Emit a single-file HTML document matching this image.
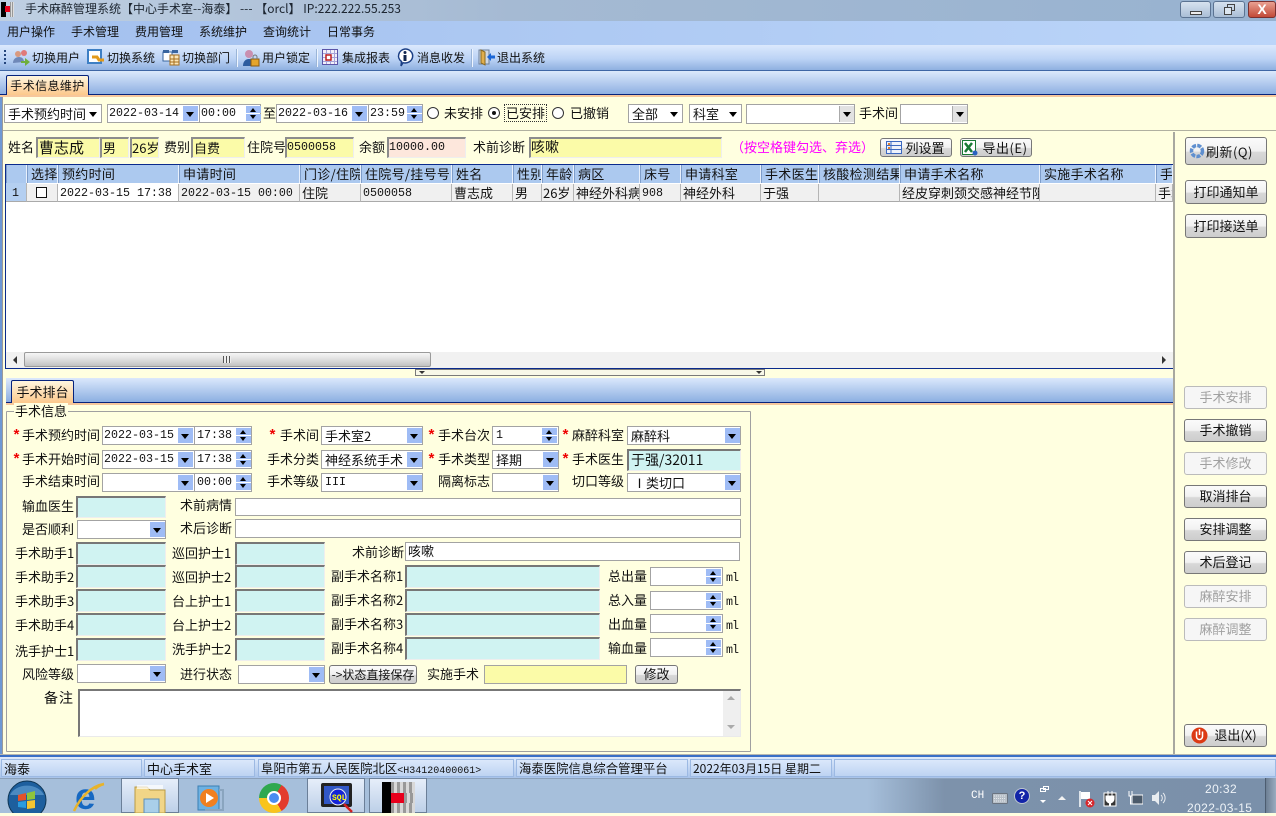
<!DOCTYPE html>
<html lang="zh"><head><meta charset="utf-8"><title>手术麻醉管理系统</title>
<style>
html,body{margin:0;padding:0}
body{width:1276px;height:813px;overflow:hidden;position:relative;background:#ffffe0;font:13px/16px "WenQuanYi Zen Hei","Noto Sans CJK SC",sans-serif;color:#111}
div,svg,span.a{position:absolute;box-sizing:border-box}
.t{white-space:nowrap;height:16px}
.m{font-family:"Liberation Mono","WenQuanYi Zen Hei",monospace;font-size:11.67px}
.s{color:#e00;font:bold 15px/16px "Liberation Mono",monospace}
.c{background:#fff;border:1px solid #a3a3a3;white-space:nowrap;padding:0 0 0 3px;line-height:17px}
.d{top:1px;bottom:1px;width:15px;background:#9fbcf5}
.d:after{content:"";position:absolute;left:3px;top:50%;margin-top:-2px;border:4px solid transparent;border-top:5px solid #000;border-bottom:0}
.w{top:1px;bottom:1px;width:15px}
.w i{position:absolute;left:0;width:15px;height:47%;background:#9fbcf5}
.w i:first-child{top:0}.w i:last-child{bottom:0}
.w i:after{content:"";position:absolute;left:4px;top:50%;margin-top:-2px;border:3.5px solid transparent}
.w i:first-child:after{border-bottom:4px solid #000;border-top:0}
.w i:last-child:after{border-top:4px solid #000;border-bottom:0}
.y{background:#fbfba8;border:1px solid #eee;border-top:2px solid #8c8c8c;border-left:2px solid #8c8c8c;padding-left:0;white-space:nowrap;line-height:17px}
.u{background:#d0f3f2;border:1px solid #eee;border-top:2px solid #777;border-left:2px solid #777}
.i{background:#fff;border:1px solid #a3a3a3;padding-left:2px;line-height:17px}
.b{border:1px solid #777;border-radius:3px;background:linear-gradient(#fbfbfb,#f1f1f1 50%,#d8d8d8 55%,#cdcdcd);text-align:center;white-space:nowrap;line-height:20px}
.x{border-color:#bbb;background:#f6f6f6;color:#a0a0a0}
.tab{background:linear-gradient(#fff6df,#fcc88c);border:1px solid #06227c;border-bottom:0;text-align:center;border-radius:2px 2px 0 0;line-height:22px}
.st{background:linear-gradient(#dbe8fb,#bdd3f2);border:1px solid #9cb9e3;height:18px;top:759px;white-space:nowrap;padding-left:2px;line-height:17px}
.h{top:165px;height:18px;background:#acc9ef;border-right:1px solid #e8f0fc;border-left:1px solid #7e9dca;white-space:nowrap;overflow:hidden;padding-left:3px;line-height:18px;letter-spacing:.3px}
.r{top:184px;height:18px;background:#f0f0f0;border-right:1px solid #b5b5b5;border-bottom:1px solid #aaa;white-space:nowrap;overflow:hidden;padding-left:2px;line-height:18px}
.sep{width:2px;top:49px;height:18px;background:#9ab5d8;border-right:1px solid #eef5ff}
.ra{width:12px;height:12px;border:1.5px solid #333;border-radius:50%;background:#fff;top:107px}
</style></head><body>

<!-- title bar -->
<div style="left:0;top:0;width:1276px;height:21px;background:linear-gradient(90deg,#bfcfe2,#a5bad3 40%,#97b2d0 100%)"></div>
<div style="left:1px;top:2px;width:5px;height:15px;background:#000"></div>
<div style="left:5px;top:6px;width:5px;height:6px;background:#e8001c"></div>
<div style="left:10px;top:2px;width:4px;height:15px;background:repeating-linear-gradient(90deg,#999 0 1px,#ddd 1px 2px)"></div>
<div class="t" style="left:25px;top:1px;color:#1c2530;font-size:12px">手术麻醉管理系统【中心手术室--海泰】 --- 【orcl】 IP:222.222.55.253</div>
<div style="left:1180px;top:1px;width:31px;height:17px;border:1px solid #5b7392;border-radius:3px;background:linear-gradient(#d6e2ef,#a9bed6)"><div style="left:9px;top:9px;width:12px;height:4px;border:1px solid #444;background:#eee"></div></div>
<div style="left:1213px;top:1px;width:32px;height:17px;border:1px solid #5b7392;border-radius:3px;background:linear-gradient(#d6e2ef,#a9bed6)"><div style="left:13px;top:2px;width:8px;height:7px;border:1px solid #444"></div><div style="left:10px;top:5px;width:8px;height:8px;border:1px solid #444;background:#dce6f0"></div></div>
<div style="left:1248px;top:1px;width:28px;height:17px;border:1px solid #7a3030;border-radius:3px;background:linear-gradient(#e9a091,#c24a38);color:#fff;font:bold 14px/15px 'Liberation Sans',sans-serif;text-align:center">X</div>

<!-- menu -->
<div style="left:0;top:21px;width:1276px;height:24px;background:linear-gradient(90deg,#a3c0ee,#bbd5f9)"></div>
<div class="t" style="left:7px;top:24px;word-spacing:0;font-size:12px">用户操作</div>
<div class="t" style="left:71px;top:24px;font-size:12px">手术管理</div>
<div class="t" style="left:135px;top:24px;font-size:12px">费用管理</div>
<div class="t" style="left:199px;top:24px;font-size:12px">系统维护</div>
<div class="t" style="left:263px;top:24px;font-size:12px">查询统计</div>
<div class="t" style="left:327px;top:24px;font-size:12px">日常事务</div>

<!-- toolbar -->
<div style="left:0;top:45px;width:1276px;height:26px;background:linear-gradient(#dbe9fd,#bcd3f5 55%,#8fb0e0);border-bottom:1px solid #3f66a5"></div>
<div style="left:4px;top:50px;width:2px;height:16px;background:repeating-linear-gradient(#24457c 0 2px,transparent 2px 4px)"></div>
<svg style="left:12px;top:49px" width="18" height="18"><circle cx="6" cy="5" r="3" fill="#d99a80"/><circle cx="12" cy="4" r="3" fill="#e07a7a"/><path d="M1 14c0-4 3-6 6-6s5 2 5 5z" fill="#6f88b8"/><path d="M9 12h4V9l5 4-5 4v-3H9z" fill="#6fae3c"/></svg>
<div class="t" style="left:32px;top:50px;font-size:12px">切换用户</div>
<svg style="left:87px;top:49px" width="18" height="18"><rect x="1" y="1" width="13" height="13" fill="#fff" stroke="#3d7fc4" stroke-width="2"/><path d="M5 8h5l2 3h5" fill="none" stroke="#e39a1a" stroke-width="3"/></svg>
<div class="t" style="left:107px;top:50px;font-size:12px">切换系统</div>
<svg style="left:162px;top:49px" width="18" height="17"><rect x="1" y="3" width="9" height="9" fill="#fff" stroke="#39659f"/><rect x="8" y="6" width="9" height="10" fill="#fbe6b8" stroke="#a66e1e"/><path d="M8 10h9M8 13h9M12 6v10" stroke="#a66e1e"/><rect x="1" y="1" width="6" height="3" fill="#39659f"/><rect x="10" y="1" width="6" height="3" fill="#39659f"/></svg>
<div class="t" style="left:182px;top:50px;font-size:12px">切换部门</div>
<div class="sep" style="left:236px"></div>
<svg style="left:242px;top:49px" width="18" height="18"><circle cx="7" cy="5" r="4" fill="#c98fb0"/><path d="M1 17c0-5 3-7 6-7s5 2 5 7z" fill="#2e5c9e"/><rect x="9" y="10" width="8" height="7" fill="#e5a52c" stroke="#8a5a10"/><path d="M11 10V8a2 2 0 0 1 4 0v2" fill="none" stroke="#777"/></svg>
<div class="t" style="left:262px;top:50px;font-size:12px">用户锁定</div>
<div class="sep" style="left:316px"></div>
<svg style="left:322px;top:49px" width="16" height="16"><rect x=".5" y=".5" width="15" height="15" fill="#f2f0fa" stroke="#5b54a8"/><path d="M1 4.500h14M1 8.500h14M1 12.500h14M4.500 1v14M8.500 1v14M12.500 1v14" stroke="#a6a2d8"/><rect x="4" y="6" width="5" height="5" fill="#fff" stroke="#c02020" stroke-width="1.500"/></svg>
<div class="t" style="left:342px;top:50px;font-size:12px">集成报表</div>
<svg style="left:396px;top:48px" width="18" height="19"><path d="M9 1a7.500 7 0 1 1-2 13.700L5 18l.5-4.500A7.500 7 0 0 1 9 1z" fill="#fff" stroke="#1b3f85" stroke-width="1.500"/><rect x="7.500" y="7" width="3" height="6" fill="#11264f"/><circle cx="9" cy="4.500" r="1.500" fill="#11264f"/></svg>
<div class="t" style="left:417px;top:50px;font-size:12px">消息收发</div>
<div class="sep" style="left:471px"></div>
<svg style="left:477px;top:48px" width="18" height="18"><path d="M2 2h10v14H2z" fill="#cfd8e4" stroke="#6d7f99"/><path d="M4 2l4 2v13l-4-2z" fill="#e0ae4c" stroke="#8a6a20"/><path d="M10 9l4-4v2.500h4v3h-4V13z" fill="#1a66d6"/></svg>
<div class="t" style="left:497px;top:50px;font-size:12px">退出系统</div>

<!-- top tab strip -->
<div style="left:0;top:71px;width:1276px;height:24px;background:linear-gradient(#dce9fc,#8fb0e2);border-bottom:1px solid #06227c"></div>
<div class="tab" style="left:6px;top:75px;width:83px;height:20px;line-height:19px;font-size:12px;letter-spacing:.4px">手术信息维护</div>
<div style="left:0;top:95px;width:1276px;height:2px;background:#f6c79c"></div>
<div style="left:0;top:97px;width:2px;height:660px;background:#6f98d4"></div>
<div style="left:2px;top:97px;width:1px;height:660px;background:#9a9a9a"></div>
<div style="left:3px;top:130px;width:1273px;height:1px;background:#b0b0a0"></div>

<!-- filter row -->
<div class="c" style="left:4px;top:104px;width:98px;height:19px">手术预约时间<div class="d" style="right:0;background:none"></div></div>
<div class="c m" style="left:107px;top:104px;width:154px;height:19px;padding-left:1px">2022-03-14<div class="d" style="left:75px"></div><div style="left:91px;top:0;bottom:0;width:1px;background:#a3a3a3"></div><span class="a" style="left:93px">00:00</span><div class="w" style="left:138px"><i></i><i></i></div></div>
<div class="t" style="left:263px;top:105px">至</div>
<div class="c m" style="left:276px;top:104px;width:147px;height:19px;padding-left:1px">2022-03-16<div class="d" style="left:75px"></div><div style="left:91px;top:0;bottom:0;width:1px;background:#a3a3a3"></div><span class="a" style="left:93px">23:59</span><div class="w" style="left:130px"><i></i><i></i></div></div>
<div class="ra" style="left:427px"></div><div class="t" style="left:444px;top:105px">未安排</div>
<div class="ra" style="left:488px"></div><div style="left:492px;top:111px;width:4px;height:4px;background:#111;border-radius:50%"></div>
<div class="t" style="left:504px;top:104px;height:18px;border:1px dotted #333;line-height:16px;padding:0 1px">已安排</div>
<div class="ra" style="left:552px"></div><div class="t" style="left:570px;top:105px">已撤销</div>
<div class="c" style="left:628px;top:104px;width:55px;height:19px">全部<div class="d" style="right:0;background:none"></div></div>
<div class="c" style="left:689px;top:104px;width:53px;height:19px">科室<div class="d" style="right:0;background:none"></div></div>
<div class="c" style="left:746px;top:104px;width:109px;height:20px"><div class="d" style="right:0;background:#e2e2e2;border-left:1px solid #aaa"></div></div>
<div class="t" style="left:859px;top:105px">手术间</div>
<div class="c" style="left:900px;top:104px;width:68px;height:20px"><div class="d" style="right:0;background:#e2e2e2;border-left:1px solid #aaa"></div></div>

<!-- patient row -->
<div class="t" style="left:8px;top:139px">姓名</div>
<div class="y" style="left:36px;top:137px;width:64px;height:21px;font-size:15px;padding-left:1px">曹志成</div>
<div class="y" style="left:100px;top:137px;width:29px;height:21px;padding-left:1px">男</div>
<div class="y" style="left:130px;top:137px;width:29px;height:21px;overflow:hidden">26岁</div>
<div class="t" style="left:164px;top:139px">费别</div>
<div class="y" style="left:191px;top:137px;width:54px;height:21px;padding-left:1px">自费</div>
<div class="t" style="left:247px;top:139px">住院号</div>
<div class="y m" style="left:285px;top:137px;width:69px;height:21px">0500058</div>
<div class="t" style="left:359px;top:139px">余额</div>
<div class="y m" style="left:387px;top:137px;width:79px;height:21px;background:#fde7dc">10000.00</div>
<div class="t" style="left:473px;top:139px">术前诊断</div>
<div class="y" style="left:529px;top:137px;width:193px;height:21px;font-size:14px">咳嗽</div>
<div class="t" style="left:731px;top:139px;color:#f0f">（按空格键勾选、弃选）</div>
<div class="b" style="left:880px;top:138px;width:72px;height:19px;line-height:17px;padding-left:18px">列设置</div>
<svg style="left:886px;top:141px" width="16" height="13"><rect x=".5" y=".5" width="15" height="12" fill="#eef2fb" stroke="#3b68c0"/><path d="M1 4.500h14M1 8.500h14M5 1v11" stroke="#3b68c0"/><rect x="2" y="2" width="2" height="2" fill="#e08030"/><rect x="2" y="6" width="2" height="2" fill="#e08030"/></svg>
<div class="b" style="left:960px;top:138px;width:72px;height:19px;line-height:17px;padding-left:18px;letter-spacing:.5px">导出(E)</div>
<svg style="left:962px;top:140px" width="16" height="16"><rect x=".5" y=".5" width="13" height="14" fill="#fff" stroke="#1a7a35"/><path d="M3 3l7 9M10 3l-7 9" stroke="#1a7a35" stroke-width="2.500"/><circle cx="13" cy="13" r="2.500" fill="#2a62c0"/></svg>

<!-- grid -->
<div style="left:5px;top:164px;width:1169px;height:205px;background:#fff;border:1px solid #0a2a8c"></div>
<div class="h" style="left:6px;width:21px"></div>
<div class="h" style="left:27px;width:31px">选择</div>
<div class="h" style="left:58px;width:121px">预约时间</div>
<div class="h" style="left:179px;width:121px">申请时间</div>
<div class="h" style="left:300px;width:61px">门诊/住院</div>
<div class="h" style="left:361px;width:91px">住院号/挂号号</div>
<div class="h" style="left:452px;width:61px">姓名</div>
<div class="h" style="left:513px;width:29px">性别</div>
<div class="h" style="left:542px;width:32px">年龄</div>
<div class="h" style="left:574px;width:66px">病区</div>
<div class="h" style="left:640px;width:41px">床号</div>
<div class="h" style="left:681px;width:80px">申请科室</div>
<div class="h" style="left:761px;width:58px">手术医生</div>
<div class="h" style="left:819px;width:81px">核酸检测结果</div>
<div class="h" style="left:900px;width:140px">申请手术名称</div>
<div class="h" style="left:1040px;width:116px">实施手术名称</div>
<div class="h" style="left:1156px;width:17px">手术</div>
<div class="r m" style="left:6px;width:21px;background:#b4cff1;padding-left:6px;top:183px;height:19px;line-height:20px">1</div>
<div class="r" style="left:27px;width:31px"><div style="left:9px;top:3px;width:11px;height:11px;border:1px solid #111;background:#fff"></div></div>
<div class="r m" style="left:58px;width:121px;background:#fff">2022-03-15 17:38</div>
<div class="r m" style="left:179px;width:121px">2022-03-15 00:00</div>
<div class="r" style="left:300px;width:61px">住院</div>
<div class="r m" style="left:361px;width:91px">0500058</div>
<div class="r" style="left:452px;width:61px">曹志成</div>
<div class="r" style="left:513px;width:29px">男</div>
<div class="r" style="left:542px;width:32px;padding-left:1px">26岁</div>
<div class="r" style="left:574px;width:66px">神经外科病</div>
<div class="r m" style="left:640px;width:41px">908</div>
<div class="r" style="left:681px;width:80px">神经外科</div>
<div class="r" style="left:761px;width:58px">于强</div>
<div class="r" style="left:819px;width:81px"></div>
<div class="r" style="left:900px;width:140px">经皮穿刺颈交感神经节阻</div>
<div class="r" style="left:1040px;width:116px"></div>
<div class="r" style="left:1156px;width:17px">手术</div>
<!-- h scroll -->
<div style="left:6px;top:352px;width:1167px;height:16px;background:#f1f1f1"></div>
<div style="left:13px;top:356px;border:4px solid transparent;border-right:4px solid #333;border-left:0"></div>
<div style="left:1162px;top:356px;border:4px solid transparent;border-left:4px solid #333;border-right:0"></div>
<div style="left:24px;top:352px;width:407px;height:15px;border:1px solid #9a9a9a;border-radius:2px;background:linear-gradient(#f6f6f6,#dcdcdc 55%,#c2c2c2)"></div>
<div style="left:223px;top:356px;width:8px;height:7px;background:repeating-linear-gradient(90deg,#555 0 1px,#eee 1px 3px)"></div>
<!-- splitter -->
<div style="left:415px;top:369px;width:350px;height:7px;border:1px solid #7a7a7a;background:#f8f8e8"></div>
<div style="left:419px;top:371px;border:3px solid transparent;border-top:3px solid #333;border-bottom:0"></div>
<div style="left:756px;top:371px;border:3px solid transparent;border-top:3px solid #333;border-bottom:0"></div>

<!-- lower tab strip -->
<div style="left:6px;top:378px;width:1167px;height:25px;background:linear-gradient(#dbe8fc,#8cafe1);border-bottom:1px solid #06227c"></div>
<div class="tab" style="left:11px;top:380px;width:63px;height:23px">手术排台</div>
<div style="left:6px;top:403px;width:1167px;height:2px;background:#f6c79c"></div>
<div style="left:1173px;top:132px;width:2px;height:622px;background:#a8a8a0"></div>

<!-- group box -->
<div style="left:6px;top:411px;width:745px;height:341px;border:1px solid #a0a0a0;border-radius:1px"></div>
<div class="t" style="left:14px;top:403px;background:#ffffe0;padding:0 1px">手术信息</div>

<!-- row 1-3 labels -->
<div class="t s" style="left:12px;top:429px">*</div><div class="t" style="left:22px;top:427px">手术预约时间</div>
<div class="t s" style="left:12px;top:453px">*</div><div class="t" style="left:22px;top:451px">手术开始时间</div>
<div class="t" style="left:22px;top:473px">手术结束时间</div>
<div class="c m" style="left:102px;top:426px;width:150px;height:19px;padding-left:1px">2022-03-15<div class="d" style="left:75px"></div><div style="left:91px;top:0;bottom:0;width:1px;background:#a3a3a3"></div><span class="a" style="left:94px">17:38</span><div class="w" style="left:133px"><i></i><i></i></div></div>
<div class="c m" style="left:102px;top:450px;width:150px;height:19px;padding-left:1px">2022-03-15<div class="d" style="left:75px"></div><div style="left:91px;top:0;bottom:0;width:1px;background:#a3a3a3"></div><span class="a" style="left:94px">17:38</span><div class="w" style="left:133px"><i></i><i></i></div></div>
<div class="c m" style="left:102px;top:473px;width:150px;height:19px;padding-left:1px"><div class="d" style="left:75px"></div><div style="left:91px;top:0;bottom:0;width:1px;background:#a3a3a3"></div><span class="a" style="left:94px">00:00</span><div class="w" style="left:133px"><i></i><i></i></div></div>

<div class="t s" style="left:268px;top:429px">*</div><div class="t" style="left:280px;top:427px">手术间</div>
<div class="t" style="left:267px;top:451px">手术分类</div>
<div class="t" style="left:267px;top:473px">手术等级</div>
<div class="c" style="left:321px;top:426px;width:102px;height:19px">手术室2<div class="d" style="right:0"></div></div>
<div class="c" style="left:321px;top:450px;width:102px;height:19px;overflow:hidden">神经系统手术<div class="d" style="right:0"></div></div>
<div class="c m" style="left:321px;top:473px;width:102px;height:19px">III<div class="d" style="right:0"></div></div>

<div class="t s" style="left:427px;top:429px">*</div><div class="t" style="left:438px;top:427px">手术台次</div>
<div class="t s" style="left:427px;top:453px">*</div><div class="t" style="left:438px;top:451px">手术类型</div>
<div class="t" style="left:438px;top:473px">隔离标志</div>
<div class="c m" style="left:492px;top:426px;width:67px;height:19px">1<div class="w" style="right:1px"><i></i><i></i></div></div>
<div class="c" style="left:492px;top:450px;width:67px;height:19px">择期<div class="d" style="right:0"></div></div>
<div class="c" style="left:492px;top:473px;width:67px;height:19px"><div class="d" style="right:0"></div></div>

<div class="t s" style="left:561px;top:429px">*</div><div class="t" style="left:572px;top:427px">麻醉科室</div>
<div class="t s" style="left:561px;top:453px">*</div><div class="t" style="left:572px;top:451px">手术医生</div>
<div class="t" style="left:572px;top:473px">切口等级</div>
<div class="c" style="left:627px;top:426px;width:114px;height:19px">麻醉科<div class="d" style="right:0"></div></div>
<div class="u" style="left:627px;top:449px;width:114px;height:22px;padding-left:2px;line-height:19px;font-size:14px">于强/32011</div>
<div class="c" style="left:627px;top:473px;width:114px;height:19px;padding-left:5px">Ⅰ类切口<div class="d" style="right:0"></div></div>

<!-- rows -->
<div class="t" style="left:22px;top:498px">输血医生</div>
<div class="u" style="left:76px;top:496px;width:90px;height:22px"></div>
<div class="t" style="left:180px;top:497px">术前病情</div>
<div class="i" style="left:235px;top:498px;width:506px;height:18px"></div>
<div class="t" style="left:22px;top:521px">是否顺利</div>
<div class="c" style="left:77px;top:520px;width:89px;height:19px"><div class="d" style="right:0"></div></div>
<div class="t" style="left:180px;top:520px">术后诊断</div>
<div class="i" style="left:235px;top:519px;width:506px;height:19px"></div>

<div class="t" style="left:15px;top:545px">手术助手1</div><div class="u" style="left:76px;top:542px;width:90px;height:23px"></div>
<div class="t" style="left:15px;top:569px">手术助手2</div><div class="u" style="left:76px;top:565px;width:90px;height:23px"></div>
<div class="t" style="left:15px;top:593px">手术助手3</div><div class="u" style="left:76px;top:589px;width:90px;height:23px"></div>
<div class="t" style="left:15px;top:617px">手术助手4</div><div class="u" style="left:76px;top:613px;width:90px;height:23px"></div>
<div class="t" style="left:15px;top:643px">洗手护士1</div><div class="u" style="left:76px;top:638px;width:90px;height:23px"></div>

<div class="t" style="left:172px;top:545px">巡回护士1</div><div class="u" style="left:235px;top:542px;width:90px;height:23px"></div>
<div class="t" style="left:172px;top:569px">巡回护士2</div><div class="u" style="left:235px;top:565px;width:90px;height:23px"></div>
<div class="t" style="left:172px;top:593px">台上护士1</div><div class="u" style="left:235px;top:589px;width:90px;height:23px"></div>
<div class="t" style="left:172px;top:617px">台上护士2</div><div class="u" style="left:235px;top:613px;width:90px;height:23px"></div>
<div class="t" style="left:172px;top:641px">洗手护士2</div><div class="u" style="left:235px;top:638px;width:90px;height:23px"></div>

<div class="t" style="left:352px;top:544px">术前诊断</div>
<div class="i" style="left:405px;top:542px;width:335px;height:19px;line-height:16px">咳嗽</div>
<div class="t" style="left:331px;top:568px">副手术名称1</div><div class="u" style="left:405px;top:565px;width:195px;height:23px"></div>
<div class="t" style="left:331px;top:592px">副手术名称2</div><div class="u" style="left:405px;top:589px;width:195px;height:23px"></div>
<div class="t" style="left:331px;top:616px">副手术名称3</div><div class="u" style="left:405px;top:613px;width:195px;height:23px"></div>
<div class="t" style="left:331px;top:640px">副手术名称4</div><div class="u" style="left:405px;top:637px;width:195px;height:23px"></div>

<div class="t" style="left:608px;top:568px">总出量</div><div class="c" style="left:650px;top:567px;width:73px;height:19px"><div class="w" style="right:1px"><i></i><i></i></div></div><div class="t m" style="left:726px;top:570px;letter-spacing:-1px">ml</div>
<div class="t" style="left:608px;top:592px">总入量</div><div class="c" style="left:650px;top:591px;width:73px;height:19px"><div class="w" style="right:1px"><i></i><i></i></div></div><div class="t m" style="left:726px;top:594px;letter-spacing:-1px">ml</div>
<div class="t" style="left:608px;top:616px">出血量</div><div class="c" style="left:650px;top:614px;width:73px;height:19px"><div class="w" style="right:1px"><i></i><i></i></div></div><div class="t m" style="left:726px;top:618px;letter-spacing:-1px">ml</div>
<div class="t" style="left:608px;top:640px">输血量</div><div class="c" style="left:650px;top:638px;width:73px;height:19px"><div class="w" style="right:1px"><i></i><i></i></div></div><div class="t m" style="left:726px;top:642px;letter-spacing:-1px">ml</div>

<div class="t" style="left:22px;top:666px">风险等级</div>
<div class="c" style="left:77px;top:664px;width:89px;height:19px"><div class="d" style="right:0"></div></div>
<div class="t" style="left:180px;top:666px">进行状态</div>
<div class="c" style="left:238px;top:665px;width:87px;height:19px"><div class="d" style="right:0"></div></div>
<div class="b" style="left:329px;top:665px;width:88px;height:19px;line-height:17px;font-size:12px">-&gt;状态直接保存</div>
<div class="t" style="left:427px;top:666px">实施手术</div>
<div style="left:484px;top:665px;width:143px;height:19px;background:#fbfba8;border:1px solid #a3a3a3"></div>
<div class="b" style="left:635px;top:665px;width:43px;height:19px;line-height:16px">修改</div>

<div class="t" style="left:44px;top:690px;font-size:14px;letter-spacing:1px">备注</div>
<div style="left:78px;top:689px;width:663px;height:48px;background:#fff;border:1px solid #eaeaea;border-top:2px solid #777;border-left:2px solid #777"></div>
<div style="left:723px;top:691px;width:17px;height:45px;background:#efefef"></div>
<div style="left:727px;top:696px;border:4px solid transparent;border-bottom:4px solid #aaa;border-top:0"></div>
<div style="left:727px;top:725px;border:4px solid transparent;border-top:4px solid #aaa;border-bottom:0"></div>

<!-- right buttons -->
<div class="b" style="left:1185px;top:137px;width:82px;height:28px;line-height:27px;padding-left:20px;letter-spacing:.5px;text-align:left">刷新(Q)</div>
<svg style="left:1189px;top:143px" width="16" height="16"><circle cx="8" cy="8" r="5.500" fill="none" stroke="#5f8fcf" stroke-width="3.500" stroke-dasharray="4 1.200"/></svg>
<div class="b" style="left:1185px;top:180px;width:82px;height:24px;line-height:22px">打印通知单</div>
<div class="b" style="left:1185px;top:214px;width:82px;height:24px;line-height:22px">打印接送单</div>
<div class="b x" style="left:1184px;top:386px;width:83px;height:23px">手术安排</div>
<div class="b" style="left:1184px;top:419px;width:83px;height:23px">手术撤销</div>
<div class="b x" style="left:1184px;top:452px;width:83px;height:23px">手术修改</div>
<div class="b" style="left:1184px;top:485px;width:83px;height:23px">取消排台</div>
<div class="b" style="left:1184px;top:518px;width:83px;height:23px">安排调整</div>
<div class="b" style="left:1184px;top:551px;width:83px;height:23px">术后登记</div>
<div class="b x" style="left:1184px;top:585px;width:83px;height:23px">麻醉安排</div>
<div class="b x" style="left:1184px;top:618px;width:83px;height:23px">麻醉调整</div>
<div class="b" style="left:1184px;top:724px;width:83px;height:23px;padding-left:20px">退出(X)</div>
<svg style="left:1191px;top:727px" width="17" height="17"><circle cx="8.500" cy="8.500" r="8" fill="#dc3a14"/><path d="M5.500 4.500v5a3 3 0 0 0 6 0v-5" fill="none" stroke="#fff" stroke-width="1.500"/><path d="M8.500 2v6" stroke="#fff" stroke-width="1.500"/></svg>

<!-- status bar -->
<div style="left:0;top:754px;width:1276px;height:1px;background:#b8b8b0"></div>
<div style="left:0;top:755px;width:1276px;height:3px;background:#3a6fc6;border-bottom:1px solid #dfe9f8"></div>
<div style="left:0;top:758px;width:1276px;height:20px;background:linear-gradient(#dbe8fb,#a8c3ea)"></div>
<div class="st" style="left:1px;width:141px">海泰</div>
<div class="st" style="left:144px;width:111px">中心手术室</div>
<div class="st" style="left:258px;width:256px;overflow:hidden;font-size:12.4px">阜阳市第五人民医院北区<span style="font:10px 'Liberation Mono',monospace">&lt;H34120400061&gt;</span></div>
<div class="st" style="left:516px;width:172px;font-size:12.4px">海泰医院信息综合管理平台</div>
<div class="st" style="left:690px;width:142px;font-size:12px">2022年03月15日 星期二</div>
<div class="st" style="left:834px;width:442px"></div>

<!-- taskbar -->
<div style="left:0;top:778px;width:1276px;height:35px;background:linear-gradient(90deg,#a6bfdb 0,#a6bfdb 68%,#7d92ab 74%,#7a90aa 100%);border-top:1px solid #8ca1ba"></div>
<svg style="left:7px;top:780px" width="40" height="33"><circle cx="20" cy="20" r="19" fill="#1d5f9e" stroke="#0f3553"/><path d="M3 15a18 14 0 0 1 34 0z" fill="#6aa6d8" opacity=".6"/><path d="M11 15l8-2v7l-8 1z" fill="#e4522a"/><path d="M20 13l8-2v8l-8 1z" fill="#8fc53c"/><path d="M11 22l8-1v7l-8-1z" fill="#2a9be0"/><path d="M20 21l8-1v8l-8 1z" fill="#f4c430"/></svg>
<svg style="left:71px;top:780px" width="36" height="33"><text x="4" y="29" font-family="Liberation Sans" font-weight="bold" font-size="37" fill="#1668c2">e</text><path d="M3 31C9 18 20 6 33 4c-5 1-9 5-9 5" fill="none" stroke="#e8b32a" stroke-width="2.500"/></svg>
<div style="left:121px;top:778px;width:58px;height:35px;background:linear-gradient(#e6eefa,#bdd0e8);border:1px solid #6b7f98"></div>
<svg style="left:133px;top:783px" width="34" height="30"><path d="M2 4h12l3 3h15v23H2z" fill="#f1d587" stroke="#b99a45"/><rect x="11" y="16" width="15" height="14" fill="#a9cfe9" stroke="#5f8fb5"/><rect x="4" y="2" width="26" height="4" fill="#fff" opacity=".7"/></svg>
<svg style="left:197px;top:785px" width="32" height="27"><rect x="1" y="1" width="21" height="24" fill="#6db1e2" stroke="#3c7fb3"/><circle cx="12" cy="13" r="9" fill="#f08020"/><path d="M9 8l8 5-8 5z" fill="#fff"/><path d="M22 5h4v20H8" fill="none" stroke="#8aa5bf" stroke-width="2"/></svg>
<div style="left:259px;top:783px;width:30px;height:30px;border-radius:50%;background:conic-gradient(from 30deg,#e33b2e 0 120deg,#f9c41c 120deg 240deg,#2fa84f 240deg 360deg)"></div>
<div style="left:267px;top:791px;width:14px;height:14px;border-radius:50%;background:#4a8cf0;border:2px solid #fff"></div>
<div style="left:307px;top:778px;width:58px;height:35px;background:linear-gradient(#e6eefa,#bdd0e8);border:1px solid #6b7f98"></div>
<svg style="left:320px;top:782px" width="34" height="31"><rect x="1" y="1" width="31" height="24" rx="2" fill="#222"/><rect x="4" y="4" width="25" height="18" fill="#3157c6"/><circle cx="18" cy="15" r="8" fill="#1424d8" stroke="#eee"/><text x="12" y="18" font-family="Liberation Mono" font-size="8" font-weight="bold" fill="#ff0">SQL</text><path d="M24 22l8 8" stroke="#d02020" stroke-width="2.500"/></svg>
<div style="left:369px;top:778px;width:58px;height:35px;background:linear-gradient(#e6eefa,#bdd0e8);border:1px solid #6b7f98"></div>
<div style="left:382px;top:782px;width:9px;height:31px;background:#000"></div>
<div style="left:391px;top:793px;width:13px;height:10px;background:#e8001c"></div>
<div style="left:391px;top:782px;width:24px;height:11px;background:repeating-linear-gradient(90deg,#999 0 3px,#d8d8d8 3px 6px)"></div>
<div style="left:391px;top:803px;width:24px;height:10px;background:repeating-linear-gradient(90deg,#999 0 3px,#d8d8d8 3px 6px)"></div>
<div style="left:404px;top:793px;width:11px;height:10px;background:repeating-linear-gradient(90deg,#999 0 3px,#d8d8d8 3px 6px)"></div>

<!-- tray -->
<div class="t m" style="left:971px;top:788px;color:#fff;font-size:11px">CH</div>
<svg style="left:992px;top:790px" width="16" height="14"><rect x=".5" y="3.500" width="15" height="10" rx="1" fill="#b8c0c8" stroke="#6b7480"/><path d="M2 6h12M2 8.500h12M2 11h12" stroke="#e6e9ec" stroke-dasharray="1 1"/></svg>
<div style="left:1014px;top:788px;width:16px;height:16px;border-radius:50%;background:#1224a8;border:1px solid #bcc5d0;color:#fff;font:bold 11px/14px 'Liberation Sans',sans-serif;text-align:center">?</div>
<div style="left:1040px;top:788px;width:6px;height:4px;border:1px solid #fff"></div>
<div style="left:1043px;top:786px;width:6px;height:4px;border:1px solid #fff"></div>
<div style="left:1040px;top:800px;border:3px solid transparent;border-top:3px solid #fff;border-bottom:0"></div>
<div style="left:1058px;top:796px;border:4px solid transparent;border-bottom:4px solid #f2f2f2;border-top:0"></div>
<svg style="left:1078px;top:790px" width="18" height="18"><path d="M2 1v16" stroke="#fff" stroke-width="1.500"/><path d="M3 2h9v7H3z" fill="#fff"/><circle cx="12" cy="13" r="4.500" fill="#d7262b"/><path d="M10 11l4 4M14 11l-4 4" stroke="#fff"/></svg>
<svg style="left:1102px;top:790px" width="16" height="17"><path d="M2 3h12v13H2z" fill="#333" stroke="#fff"/><path d="M6 1v5M10 1v5M4 6h8v3a4 4 0 0 1-8 0z" fill="#fff" stroke="#fff"/><path d="M8 12v4" stroke="#fff" stroke-width="2"/></svg>
<svg style="left:1127px;top:790px" width="16" height="16"><rect x="5" y="5" width="11" height="9" fill="#4b5a6a" stroke="#fff"/><path d="M2 1v5h3V1M3.500 6v8h8" fill="none" stroke="#fff"/></svg>
<svg style="left:1151px;top:790px" width="16" height="16"><path d="M1 5h3l4-4v14l-4-4H1z" fill="#e8ecf0"/><path d="M10 5a4 4 0 0 1 0 6M12 3a7 7 0 0 1 0 10" fill="none" stroke="#e8ecf0"/></svg>
<div class="t" style="left:1205px;top:781px;color:#eef3f8;font-family:'Liberation Sans',sans-serif;font-size:12px;letter-spacing:.4px">20:32</div>
<div class="t" style="left:1187px;top:800px;color:#eef3f8;font-family:'Liberation Sans',sans-serif;font-size:12px;letter-spacing:.4px">2022-03-15</div>
<div style="left:1265px;top:778px;width:11px;height:35px;background:linear-gradient(90deg,#6d7f94,#9aacc0);border-left:1px solid #4d5d70"></div>
</body></html>
